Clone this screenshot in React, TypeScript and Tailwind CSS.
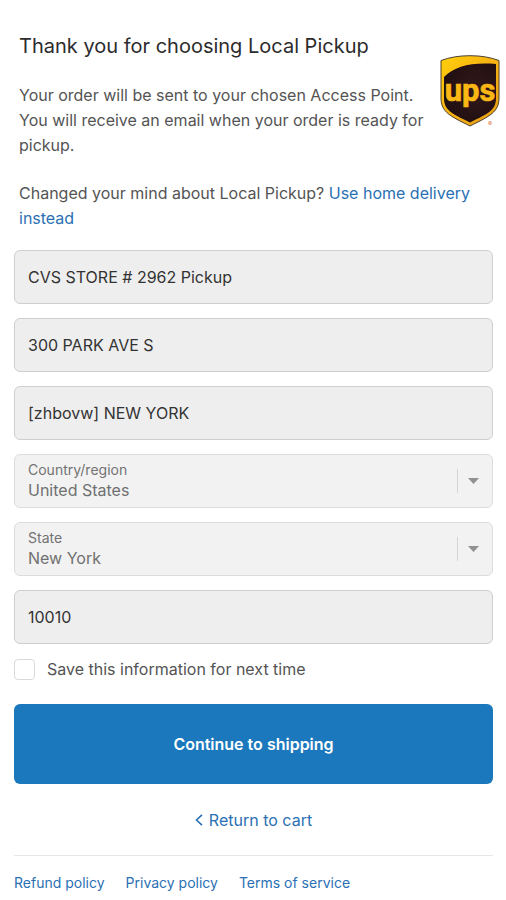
import { useState } from "react";

const LINK = "text-[#2a70b3] hover:underline";

function UpsLogo() {
  return (
    <svg className="h-[72px] w-[60px] shrink-0" viewBox="0 0 60 72" role="img" aria-label="UPS">
      <defs>
        <linearGradient id="gold" x1="0" y1="0" x2="1" y2="1">
          <stop offset="0" stopColor="#ffce0a" />
          <stop offset="0.5" stopColor="#f8b313" />
          <stop offset="1" stopColor="#e39a10" />
        </linearGradient>
        <radialGradient id="brown" cx="0.6" cy="0.45" r="0.7">
          <stop offset="0" stopColor="#33191a" />
          <stop offset="1" stopColor="#1d0d10" />
        </radialGradient>
      </defs>
      <path
        d="M1 5.500C10 2.200 19 .7 30 .7S50 2.200 59 5.500V43C59 57 50 61 30 71C10 61 1 57 1 43Z"
        fill="url(#gold)"
        stroke="#4c4030"
        strokeWidth="1"
      />
      <path
        d="M4 22C15 11 32 7 56 9V43C56 55 48.500 58.500 30 67.500C11.500 58.500 4 55 4 43Z"
        fill="url(#brown)"
      />
      <text
        x="30"
        y="46"
        textAnchor="middle"
        fontFamily="Roboto, sans-serif"
        fontSize="31"
        fontWeight="700"
        fill="#fbb814"
        stroke="#fbb814"
        strokeWidth="0.6"
      >
        ups
      </text>
      <text x="50" y="71" textAnchor="middle" fontFamily="Inter, sans-serif" fontSize="6" fill="#d9793f">
        ®
      </text>
    </svg>
  );
}

function TextField({ id, label, defaultValue }: { id: string; label: string; defaultValue: string }) {
  return (
    <input
      id={id}
      aria-label={label}
      className="block h-[54px] w-full rounded-md border border-[#cfcfcf] bg-[#eeeeee] px-[13px] text-base text-[#333333] outline-none"
      defaultValue={defaultValue}
      readOnly
      type="text"
    />
  );
}

function SelectField({ id, label, value }: { id: string; label: string; value: string }) {
  return (
    <div className="relative">
      <label htmlFor={id} className="pointer-events-none absolute top-1.5 left-3.5 text-sm text-[#737373]">
        {label}
      </label>
      <select
        id={id}
        className="block h-[54px] w-full appearance-none rounded-md border border-[#dddddd] bg-[#f2f2f2] px-[13px] pt-[18px] text-base text-[#707070] opacity-100 outline-none"
        defaultValue={value}
        disabled
      >
        <option>{value}</option>
      </select>
      <div className="pointer-events-none absolute inset-y-0 right-3.5 flex items-center gap-2.5">
        <span className="h-6 w-px bg-[#d4d4d4]" />
        <svg className="h-1.5 w-[11px]" viewBox="0 0 11 6" aria-hidden="true">
          <path d="M0 0H11L5.500 6Z" fill="#919191" />
        </svg>
      </div>
    </div>
  );
}

export default function App() {
  const [save, setSave] = useState(false);

  return (
    <main className="min-h-screen bg-white pb-2 font-['Inter',sans-serif] text-base text-[#545454]">
      <header className="pt-8 pr-1.5 pl-[19px]">
        <div className="flex items-start justify-between gap-4">
          <div>
            <h1 className="text-xl leading-7 text-[#2c2c2c]">Thank you for choosing Local Pickup</h1>
            <p className="mt-[23px] leading-[25px]">
              Your order will be sent to your chosen Access Point. You will receive an email when your order is ready
              for pickup.
            </p>
          </div>
          <div className="pt-[23px]">
            <UpsLogo />
          </div>
        </div>
        <p className="mt-[23px] pr-2 leading-[25px]">
          Changed your mind about Local Pickup?{" "}
          <a href="#home-delivery" className={LINK}>
            Use home delivery instead
          </a>
        </p>
      </header>

      <form className="mt-[19px] pr-[13px] pl-3.5" onSubmit={(event) => event.preventDefault()}>
        <div className="space-y-3.5">
          <TextField id="company" label="Company" defaultValue="CVS STORE # 2962 Pickup" />
          <TextField id="address" label="Address" defaultValue="300 PARK AVE S" />
          <TextField id="city" label="City" defaultValue="[zhbovw] NEW YORK" />
          <SelectField id="country" label="Country/region" value="United States" />
          <SelectField id="state" label="State" value="New York" />
          <TextField id="zip" label="ZIP code" defaultValue="10010" />
        </div>

        <div className="mt-[13px] flex items-center gap-3">
          <input
            id="save"
            type="checkbox"
            checked={save}
            onChange={(event) => setSave(event.target.checked)}
            className="h-[21px] w-[21px] appearance-none rounded border border-[#d9d9d9] bg-white checked:bg-[#1b78bd]"
          />
          <label htmlFor="save">Save this information for next time</label>
        </div>

        <button
          className="mt-[23px] block h-20 w-full rounded-md bg-[#1b78bd] text-base font-semibold text-white"
          type="submit"
        >
          Continue to shipping
        </button>

        <div className="mt-6 flex justify-center">
          <a href="#cart" className={`flex items-center gap-1.5 ${LINK}`}>
            <svg className="h-3 w-2" viewBox="0 0 8 12" fill="none" aria-hidden="true">
              <path d="M7 .8L1.500 6L7 11.200" stroke="currentColor" strokeWidth="1.600" />
            </svg>
            Return to cart
          </a>
        </div>
      </form>

      <footer className="mt-[23px] mr-[13px] ml-3.5 flex gap-[21px] border-t border-[#e6e6e6] pt-[17px] text-sm">
        <a href="#refund" className={LINK}>
          Refund policy
        </a>
        <a href="#privacy" className={LINK}>
          Privacy policy
        </a>
        <a href="#terms" className={LINK}>
          Terms of service
        </a>
      </footer>
    </main>
  );
}
